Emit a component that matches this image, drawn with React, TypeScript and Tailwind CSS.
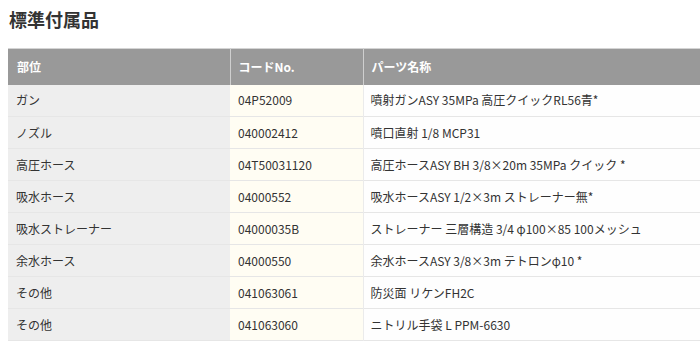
const rows: [string, string, string][] = [
  ["ガン", "04P52009", "噴射ガンASY 35MPa 高圧クイックRL56青*"],
  ["ノズル", "040002412", "噴口直射 1/8 MCP31"],
  ["高圧ホース", "04T50031120", "高圧ホースASY BH 3/8×20m 35MPa クイック *"],
  ["吸水ホース", "04000552", "吸水ホースASY 1/2×3m ストレーナー無*"],
  ["吸水ストレーナー", "04000035B", "ストレーナー 三層構造 3/4 φ100×85 100メッシュ"],
  ["余水ホース", "04000550", "余水ホースASY 3/8×3m テトロンφ10 *"],
  ["その他", "041063061", "防災面 リケンFH2C"],
  ["その他", "041063060", "ニトリル手袋 L PPM-6630"],
];

export default function App() {
  return (
    <div
      className="w-[700px] h-[349px] overflow-hidden bg-white text-[#333] px-2"
      style={{ fontFamily: '"Noto Sans CJK JP", "Noto Sans", sans-serif' }}
    >
      <h2 className="pt-[6px] pl-px text-[18px] leading-[26px] font-bold text-[#333]">
        標準付属品
      </h2>

      <table className="mt-[16px] w-[692px] border-collapse text-[12px]">
        <thead>
          <tr className="h-[36px] bg-[#999999] text-white border-t border-[#d4d4d4]">
            <th className="w-[222px] text-left font-bold pl-[9px] border-r border-[#cfcfcf]">部位</th>
            <th className="w-[133px] text-left font-bold pl-[8px] border-r border-[#cfcfcf]">コードNo.</th>
            <th className="text-left font-bold pl-[8px]">パーツ名称</th>
          </tr>
        </thead>
        <tbody>
          {rows.map(([part, code, name], i) => (
            <tr key={i} className="h-[32px] border-b border-[#e6e6e6]">
              <td className="bg-[#eeeeee] pl-[8px]">{part}</td>
              <td className="bg-[#fffdf3] pl-[8px] border-r border-[#ebebeb]">{code}</td>
              <td className="bg-[#fefefe] pl-[7px]">{name}</td>
            </tr>
          ))}
        </tbody>
      </table>
    </div>
  );
}
